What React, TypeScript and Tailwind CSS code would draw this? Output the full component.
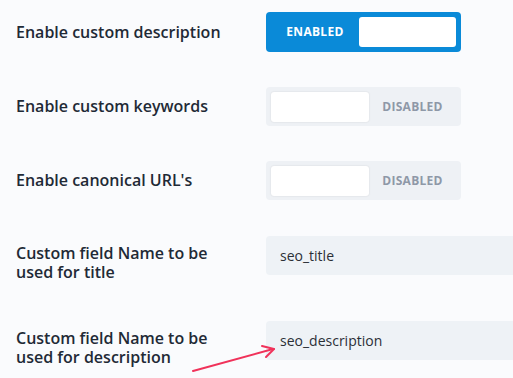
const font = { fontFamily: '"Open Sans", "Noto Sans", sans-serif' };

const Label = ({ children, className = '' }: { children: React.ReactNode; className?: string }) => (
  <div className={`w-[266px] shrink-0 pl-4 text-[16px] font-semibold leading-[19px] text-[#1f2a36] ${className}`}>
    {children}
  </div>
);

const ToggleOn = () => (
  <div className="flex h-10 w-[195px] items-center rounded-[4px] bg-[#0a8ad8] p-[5px]">
    <span className="flex-1 text-center text-[12px] font-bold tracking-wide text-white">ENABLED</span>
    <span className="h-[30px] w-[97px] rounded-[3px] bg-white" />
  </div>
);

const ToggleOff = () => (
  <div className="flex h-[39px] w-[195px] items-center rounded-[4px] bg-[#eef1f5] p-[5px]">
    <span className="h-[30px] w-[98px] rounded-[3px] bg-white shadow-[0_0_2px_rgba(0,0,0,0.12)]" />
    <span className="flex-1 text-center text-[12px] font-bold tracking-wide text-[#8e98a7]">DISABLED</span>
  </div>
);

const Field = ({ value }: { value: string }) => (
  <div className="flex h-[39px] flex-1 items-center rounded-l-[4px] bg-[#eef2f6] pl-[14px] text-[14px] text-[#2b2f36]">
    {value}
  </div>
);

export default function App() {
  return (
    <div className="relative h-[378px] w-[513px] overflow-hidden bg-[#fafbfd]" style={font}>
      <div className="flex flex-col">
        <div className="mt-3 flex items-center">
          <Label>Enable custom description</Label>
          <ToggleOn />
        </div>
        <div className="mt-[35px] flex items-center">
          <Label>Enable custom keywords</Label>
          <ToggleOff />
        </div>
        <div className="mt-[35px] flex items-center">
          <Label>Enable canonical URL's</Label>
          <ToggleOff />
        </div>
        <div className="mt-[36px] flex items-start">
          <Label className="mt-2">
            Custom field Name to be
            <br />
            used for title
          </Label>
          <Field value="seo_title" />
        </div>
        <div className="mt-[39px] flex items-start">
          <Label className="mt-2">
            Custom field Name to be
            <br />
            used for description
          </Label>
          <Field value="seo_description" />
        </div>
      </div>

      <svg className="absolute left-0 top-0" width="513" height="378" viewBox="0 0 513 378">
        <g stroke="#f0325a" strokeWidth="2" strokeLinecap="round" fill="none">
          <line x1="193" y1="371" x2="273" y2="349" />
          <line x1="262" y1="346" x2="274" y2="349" />
          <line x1="266" y1="357" x2="274" y2="349" />
        </g>
      </svg>
    </div>
  );
}
